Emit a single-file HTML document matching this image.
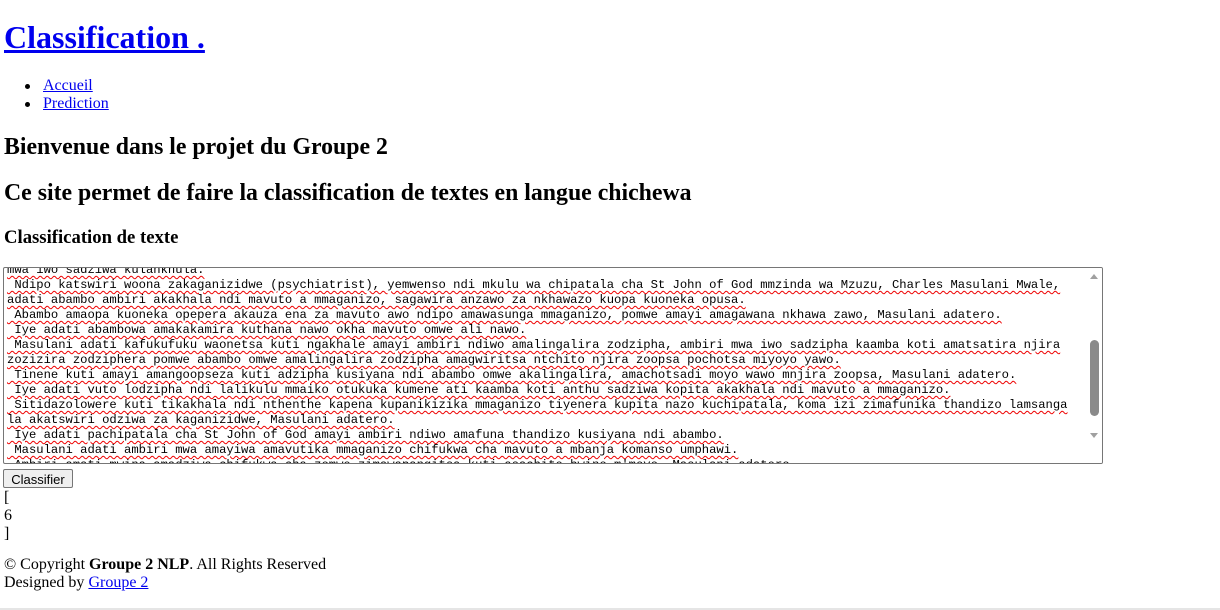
<!DOCTYPE html>
<html><head><meta charset="utf-8"><style>
body{margin:0;width:1220px;height:610px;overflow:hidden;font-family:"Liberation Serif",serif;font-size:16px;color:#000;background:#fff;position:relative}
a{color:#0000ee}
.a{position:absolute;white-space:nowrap;margin:0}
h1.a{font-size:32px;line-height:37px}
h2.a{font-size:23.8px;line-height:28px}
h3.a{font-size:18.7px;line-height:22px}
ul.a{padding:0;list-style:none;line-height:18px}
ul li{position:relative;padding-left:43px}
ul li:before{content:"";position:absolute;left:25px;top:7px;width:5px;height:5px;border-radius:50%;background:#000}
.ta{position:absolute;left:3px;top:267px;width:1098px;height:195px;border:1px solid #767676;border-radius:2px;overflow:hidden;background:#fff}
.tx{position:absolute;left:3px;top:-5px;font-family:"Liberation Mono",monospace;font-size:12.2px;line-height:15px;white-space:pre;color:#000;text-decoration:underline wavy #e00;text-decoration-thickness:1px;text-underline-offset:2px}
.sb{position:absolute;right:0;top:0;width:15px;height:195px;background:#fff}
.th{position:absolute;right:3px;top:72px;width:9px;height:76px;border-radius:5px;background:#8a8a8a}
.btn{position:absolute;left:3px;top:469px;width:70px;height:19px;border:1px solid #767676;border-radius:2px;background:#efefef;font-family:"Liberation Sans",sans-serif;font-size:13px;line-height:19px;text-align:center;box-sizing:border-box}
</style></head><body>
<h1 class="a" style="left:4px;top:19px"><a href="#">Classification .</a></h1>
<ul class="a" style="left:0;top:77px"><li><a href="#">Accueil</a></li><li><a href="#">Prediction</a></li></ul>
<h2 class="a" style="left:4px;top:133px">Bienvenue dans le projet du Groupe 2</h2>
<h2 class="a" style="left:4px;top:179px">Ce site permet de faire la classification de textes en langue chichewa</h2>
<h3 class="a" style="left:4px;top:227px">Classification de texte</h3>
<div class="ta"><div class="tx">mwa iwo sadziwa kulankhula.
 Ndipo katswiri woona zakaganizidwe (psychiatrist), yemwenso ndi mkulu wa chipatala cha St John of God mmzinda wa Mzuzu, Charles Masulani Mwale,
adati abambo ambiri akakhala ndi mavuto a mmaganizo, sagawira anzawo za nkhawazo kuopa kuoneka opusa.
 Abambo amaopa kuoneka opepera akauza ena za mavuto awo ndipo amawasunga mmaganizo, pomwe amayi amagawana nkhawa zawo, Masulani adatero.
 Iye adati abambowa amakakamira kuthana nawo okha mavuto omwe ali nawo.
 Masulani adati kafukufuku waonetsa kuti ngakhale amayi ambiri ndiwo amalingalira zodzipha, ambiri mwa iwo sadzipha kaamba koti amatsatira njira
zozizira zodziphera pomwe abambo omwe amalingalira zodzipha amagwiritsa ntchito njira zoopsa pochotsa miyoyo yawo.
 Tinene kuti amayi amangoopseza kuti adzipha kusiyana ndi abambo omwe akalingalira, amachotsadi moyo wawo mnjira zoopsa, Masulani adatero.
 Iye adati vuto lodzipha ndi lalikulu mmaiko otukuka kumene ati kaamba koti anthu sadziwa kopita akakhala ndi mavuto a mmaganizo.
 Sitidazolowere kuti tikakhala ndi nthenthe kapena kupanikizika mmaganizo tiyenera kupita nazo kuchipatala, koma izi zimafunika thandizo lamsanga
la akatswiri odziwa za kaganizidwe, Masulani adatero.
 Iye adati pachipatala cha St John of God amayi ambiri ndiwo amafuna thandizo kusiyana ndi abambo.
 Masulani adati ambiri mwa amayiwa amavutika mmaganizo chifukwa cha mavuto a mbanja komanso umphawi.
 Ambiri amati mwina amadziwa chifukwa cha zomwe zimawapangitsa kuti asachite bwino m'moyo, Masulani adatero.</div>
<div class="sb"><div style="position:absolute;left:3px;top:6px;border:4px solid transparent;border-bottom:5px solid #a0a0a0;border-top:0"></div><div class="th"></div><div style="position:absolute;left:3px;top:165px;border:4px solid transparent;border-top:5px solid #a0a0a0;border-bottom:0"></div></div></div>
<div class="btn">Classifier</div>
<div class="a" style="left:4px;top:489px;line-height:18px">[<br>6<br>]</div>
<div class="a" style="left:4px;top:556px;line-height:18px">© Copyright <b>Groupe 2 NLP</b>. All Rights Reserved<br>Designed by <a href="#">Groupe 2</a></div>
<div class="a" style="left:0;top:608px;width:1220px;height:2px;background:#e5e5e5"></div>
</body></html>
